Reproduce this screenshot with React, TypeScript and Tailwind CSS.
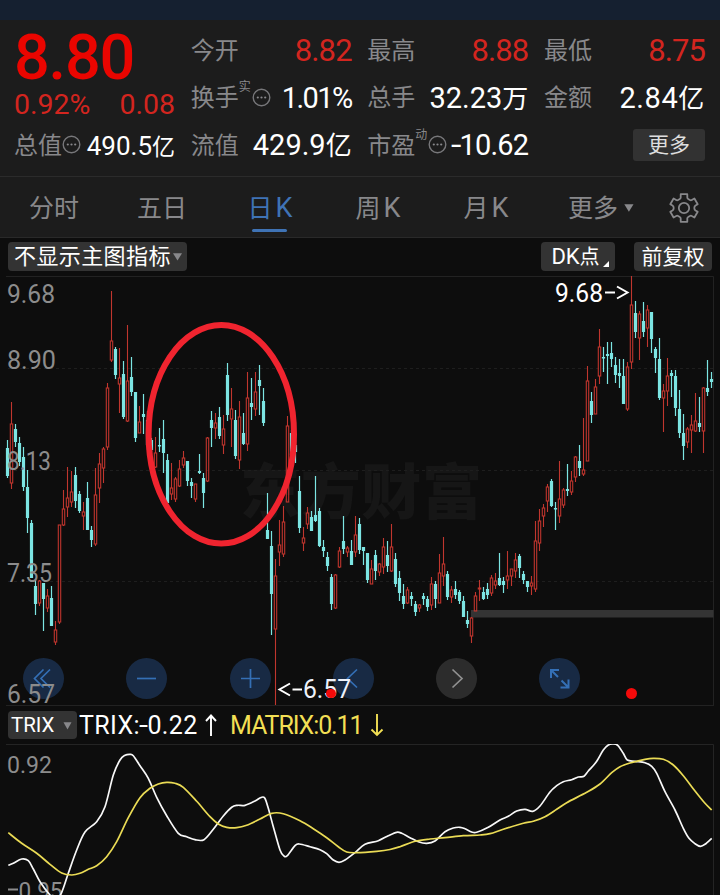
import React from "react";

type Candle = [number, number, number, number, "r" | "c"];

// High, body top, body bottom and low of every candle, in chart pixels.
const CANDLES: Candle[] = [
  [440, 448, 476, 478, "c"], [402, 424, 483, 489, "r"], [424, 429, 442, 447, "c"], [437, 443, 462, 466, "c"],
  [447, 457, 487, 491, "c"], [470, 487, 518, 533, "c"], [520, 523, 578, 578, "c"], [580, 586, 604, 615, "c"],
  [580, 581, 603, 606, "r"], [583, 583, 599, 631, "c"], [589, 596, 608, 612, "r"], [586, 598, 626, 626, "c"],
  [621, 630, 642, 645, "r"], [525, 525, 622, 624, "r"], [490, 509, 525, 526, "r"], [467, 498, 507, 517, "r"],
  [471, 492, 502, 507, "r"], [467, 475, 501, 508, "c"], [491, 494, 511, 513, "c"], [502, 512, 516, 530, "r"],
  [482, 498, 530, 530, "c"], [526, 530, 540, 547, "c"], [468, 495, 544, 546, "r"], [453, 464, 488, 503, "r"],
  [447, 449, 468, 483, "r"], [383, 388, 447, 450, "r"], [291, 341, 360, 362, "r"], [347, 349, 375, 379, "c"],
  [348, 378, 384, 413, "r"], [361, 374, 417, 419, "c"], [325, 381, 421, 422, "r"], [357, 377, 392, 396, "c"],
  [392, 392, 438, 442, "c"], [406, 422, 433, 433, "r"], [394, 414, 417, 434, "c"], [411, 420, 445, 450, "c"],
  [438, 440, 450, 452, "c"], [437, 453, 467, 468, "r"], [428, 445, 446, 452, "c"], [420, 439, 453, 473, "c"],
  [454, 460, 503, 503, "c"], [463, 488, 494, 500, "r"], [477, 479, 499, 502, "r"], [460, 469, 486, 487, "r"],
  [451, 458, 465, 468, "r"], [461, 461, 481, 486, "c"], [478, 482, 486, 498, "c"], [484, 484, 499, 502, "r"],
  [454, 471, 473, 474, "c"], [473, 478, 493, 508, "c"], [437, 438, 481, 482, "r"], [411, 420, 428, 447, "c"],
  [413, 423, 428, 439, "r"], [407, 417, 436, 439, "c"], [415, 429, 445, 454, "r"], [363, 375, 415, 421, "c"],
  [388, 409, 419, 447, "r"], [410, 420, 456, 459, "c"], [401, 417, 460, 469, "r"], [413, 433, 444, 445, "c"],
  [372, 398, 444, 451, "r"], [378, 403, 407, 420, "c"], [372, 392, 409, 416, "r"], [365, 380, 386, 415, "c"],
  [388, 401, 423, 426, "c"], [493, 530, 539, 539, "c"], [531, 546, 594, 635, "c"], [559, 576, 629, 705, "r"],
  [520, 545, 552, 566, "r"], [506, 522, 554, 557, "r"], [416, 426, 502, 502, "r"], [430, 433, 455, 460, "c"],
  [440, 445, 452, 463, "c"], [476, 491, 528, 533, "c"], [527, 538, 543, 551, "r"], [507, 513, 524, 529, "r"],
  [511, 517, 531, 531, "c"], [476, 515, 521, 522, "c"], [508, 511, 546, 547, "c"], [540, 547, 551, 557, "c"],
  [552, 557, 566, 571, "c"], [574, 577, 604, 610, "c"], [574, 575, 608, 609, "r"], [547, 551, 567, 568, "r"],
  [516, 541, 549, 554, "c"], [546, 548, 552, 557, "r"], [540, 551, 565, 565, "c"], [516, 535, 552, 557, "r"],
  [518, 524, 550, 554, "c"], [547, 547, 551, 565, "c"], [553, 553, 580, 583, "c"], [560, 569, 584, 584, "r"],
  [550, 555, 571, 580, "c"], [563, 564, 572, 576, "r"], [538, 547, 567, 574, "r"], [541, 555, 566, 572, "c"],
  [524, 547, 571, 572, "r"], [553, 559, 584, 587, "c"], [571, 578, 593, 601, "c"], [584, 596, 604, 609, "c"],
  [587, 590, 603, 604, "r"], [592, 596, 599, 606, "c"], [601, 604, 612, 616, "c"], [604, 605, 608, 612, "r"],
  [593, 596, 599, 605, "c"], [596, 599, 607, 611, "c"], [577, 584, 605, 610, "r"], [581, 584, 599, 608, "c"],
  [554, 573, 603, 603, "r"], [537, 564, 576, 586, "r"], [571, 574, 597, 600, "c"], [586, 590, 597, 603, "r"],
  [581, 589, 595, 599, "c"], [590, 592, 601, 604, "c"], [596, 601, 617, 617, "c"], [611, 620, 624, 628, "c"],
  [617, 618, 636, 643, "r"], [592, 596, 611, 611, "r"], [580, 588, 589, 601, "r"], [587, 592, 599, 600, "c"],
  [583, 589, 595, 599, "c"], [575, 578, 593, 596, "r"], [573, 581, 585, 589, "r"], [553, 578, 585, 586, "c"],
  [577, 581, 585, 593, "c"], [551, 576, 580, 589, "r"], [569, 569, 576, 586, "r"], [553, 560, 571, 578, "r"],
  [554, 556, 568, 578, "c"], [571, 574, 580, 584, "c"], [581, 581, 587, 592, "c"], [576, 583, 586, 595, "r"],
  [521, 541, 589, 592, "r"], [509, 521, 543, 551, "r"], [504, 508, 516, 527, "r"], [484, 487, 501, 512, "r"],
  [479, 481, 506, 507, "c"], [502, 508, 509, 530, "c"], [461, 499, 516, 523, "r"], [488, 490, 505, 508, "r"],
  [464, 489, 491, 496, "c"], [471, 481, 492, 495, "r"], [456, 457, 477, 482, "r"], [445, 461, 468, 476, "c"],
  [418, 470, 474, 476, "r"], [366, 381, 461, 461, "r"], [392, 401, 415, 423, "c"], [379, 387, 414, 414, "r"],
  [329, 347, 376, 384, "r"], [347, 357, 358, 372, "c"], [342, 354, 356, 384, "c"], [342, 353, 359, 367, "c"],
  [357, 365, 375, 383, "c"], [359, 373, 376, 388, "c"], [359, 376, 404, 404, "c"], [362, 367, 409, 411, "r"],
  [276, 305, 362, 369, "r"], [301, 313, 332, 338, "c"], [311, 314, 338, 360, "r"], [302, 321, 332, 337, "c"],
  [305, 310, 328, 347, "r"], [312, 312, 339, 353, "c"], [347, 349, 358, 373, "c"], [338, 359, 398, 400, "c"],
  [384, 391, 398, 432, "r"], [358, 376, 391, 406, "r"], [370, 373, 376, 397, "c"], [370, 376, 408, 416, "c"],
  [390, 409, 433, 438, "c"], [414, 433, 446, 460, "c"], [427, 429, 442, 448, "r"], [415, 425, 430, 453, "r"],
  [393, 421, 431, 432, "r"], [397, 423, 427, 432, "c"], [387, 388, 431, 453, "r"], [360, 388, 392, 396, "c"],
  [372, 379, 382, 388, "c"],
];

type Point = [number, number];

const TRIX_LINE: Point[] = [
  [8.3, 865.3], [13.3, 863.3], [21.7, 859], [28.3, 860.7], [33.3, 869], [40, 881.7], [50, 895], [56, 900], [61.7, 892.3],
  [68.3, 873.3], [76.7, 850], [85, 832], [96.7, 821.7], [105, 806.7], [113.3, 775], [120, 760], [125, 755.3], [130, 754.3],
  [133.3, 755.7], [140, 765.7], [148.3, 778.3], [156.7, 797.3], [166.7, 815.7], [178.3, 833.3], [186.7, 836.7], [195, 839.7],
  [204, 839.7], [213.3, 829.3], [223.3, 816], [231.7, 807.3], [237.3, 805.3], [245, 805.3], [255, 801], [261, 797.5],
  [264.7, 798], [268.3, 808.3], [273.3, 826.7], [280, 850], [284, 856], [287.3, 855.7], [295, 845.7], [299.3, 844],
  [310, 846.7], [320, 849.7], [326.7, 853.7], [333.3, 860], [339, 862.3], [345, 860], [355, 852.7], [365, 844.3],
  [378.3, 840.7], [388.3, 835.7], [396.7, 832.3], [401.7, 833.3], [410, 837.7], [418.3, 841.7], [426.7, 843.3], [435, 841],
  [445, 831.7], [453.3, 828], [460, 827.3], [465, 828.7], [471.7, 832], [476.7, 832.3], [488.3, 827.3], [500, 820],
  [508.3, 816.3], [516.7, 811], [525, 809.3], [532.7, 811.3], [540, 806], [550, 792], [556.7, 785.7], [563.3, 781.7],
  [571.7, 779.7], [578.3, 777], [584, 776.3], [588.3, 771], [596, 762.3], [603.3, 750], [608.3, 745], [612.7, 744],
  [617.7, 745.3], [623.3, 753.3], [627.3, 760], [635, 761.3], [645, 762.7], [651.7, 766.3], [656.7, 773.3], [665, 791.7],
  [675, 810], [683.3, 828.3], [689, 838.3], [695, 843.7], [700.3, 846.3], [705, 844.3], [711.7, 838.3],
];

const MATRIX_LINE: Point[] = [
  [8.3, 832.7], [21.7, 843.3], [36.7, 853.3], [50, 864.3], [61.7, 873], [71.7, 875], [80, 873.3], [88.3, 869.3],
  [96.7, 865.7], [106.7, 856.7], [116.7, 841.7], [128.3, 817.7], [140, 797.7], [150, 788.3], [158.3, 784], [166.7, 782.3],
  [175, 783.3], [183.3, 787.3], [196.7, 801.3], [210, 816.7], [218.3, 824], [226.7, 827.3], [236.7, 827.7], [246.7, 825.3],
  [260, 819], [271.7, 813.3], [283.3, 813.7], [300, 820.7], [313.3, 828.7], [326.7, 837.7], [338.3, 846.7], [346.7, 852],
  [356.7, 852.7], [376.7, 851.3], [390, 849.5], [400, 846.7], [415, 841.3], [430, 839], [445, 837.7], [463.3, 835.7],
  [480, 835], [490, 833.7], [503.3, 829.3], [523.3, 823.3], [533.3, 821.3], [545, 816.7], [556.7, 809.3], [566.7, 802.7],
  [586.7, 792.3], [600, 784], [611.7, 772.7], [620, 766.7], [630, 763], [645, 759.3], [653.3, 758.3], [663.3, 759.3],
  [673.3, 765], [683.3, 775.7], [695, 791], [705, 803.3], [711.7, 810],
];

// Catmull-Rom spline through the points, written as cubic Béziers.
function smooth(points: Point[]): string {
  let d = `M${points[0][0]} ${points[0][1]}`;
  for (let i = 0; i < points.length - 1; i++) {
    const a = points[Math.max(0, i - 1)];
    const b = points[i];
    const c = points[i + 1];
    const e = points[Math.min(points.length - 1, i + 2)];
    d += `C${b[0] + (c[0] - a[0]) / 6} ${b[1] + (c[1] - a[1]) / 6} ${c[0] - (e[0] - b[0]) / 6} ${c[1] - (e[1] - b[1]) / 6} ${c[0]} ${c[1]}`;
  }
  return d;
}

function Info() {
  return (
    <svg className="h-[19px] w-[19px] shrink-0" viewBox="0 0 19 19" fill="none">
      <circle cx="9.5" cy="9.5" r="8.3" stroke="#77777a" strokeWidth="1.4" />
      <circle cx="5.8" cy="9.5" r="1.1" fill="#88888b" />
      <circle cx="9.5" cy="9.5" r="1.1" fill="#88888b" />
      <circle cx="13.2" cy="9.5" r="1.1" fill="#88888b" />
    </svg>
  );
}

function Cell({ label, sup, info, children }: { label: string; sup?: string; info?: boolean; children?: React.ReactNode }) {
  return (
    <div className="flex h-[47.5px] items-center justify-between whitespace-nowrap">
      <div className="flex items-center text-[24px] leading-none text-[#88888b]">
        <span>{label}</span>
        {sup && <span className="mr-[1px] self-start text-[12px] leading-none -mt-[5px]">{sup}</span>}
        {info && <span className="-mt-[2px]"><Info /></span>}
      </div>
      <div className="leading-none">{children}</div>
    </div>
  );
}

const RED = "text-[31px] tracking-[-0.9px] text-[#d3251f]";
const WHITE = "text-[29px] text-white";

function Quote() {
  return (
    <section className="grid h-[157px] grid-cols-[161px_161px_161px_161px] justify-between border-b border-[#2b2b2b] bg-[#1c1c1c] pt-[7px] pr-[15px] pl-[14px]">
      <div>
        <div className="flex h-[62px] items-center text-[63px] leading-[50px] font-medium tracking-[-1.2px] text-[#ea0500]">8.80</div>
        <div className="flex h-[33px] items-center justify-between text-[28.5px] leading-none text-[#d3251f]">
          <span>0.92%</span>
          <span>0.08</span>
        </div>
        <Cell label="总值" info>
          <span className="text-[26px] text-white">490.5<span className="text-[23px]">亿</span></span>
        </Cell>
      </div>
      <div>
        <Cell label="今开"><span className={RED}>8.82</span></Cell>
        <Cell label="换手" sup="实" info><span className="text-[29px] tracking-[-1.6px] text-white">1.01%</span></Cell>
        <Cell label="流值"><span className={WHITE}>429.9<span className="text-[26px]">亿</span></span></Cell>
      </div>
      <div>
        <Cell label="最高"><span className={RED}>8.88</span></Cell>
        <Cell label="总手"><span className={WHITE}>32.23<span className="text-[26px]">万</span></span></Cell>
        <Cell label="市盈" sup="动" info>
          <span className="text-[29px] tracking-[-0.8px] text-white"><span className="inline-block scale-x-130">-</span>10.62</span>
        </Cell>
      </div>
      <div>
        <Cell label="最低"><span className={RED}>8.75</span></Cell>
        <Cell label="金额"><span className="text-[29px] tracking-[0.6px] text-white">2.84<span className="text-[26px]">亿</span></span></Cell>
        <div className="flex h-[46px] items-center justify-end">
          <button className="flex h-[32px] w-[72px] items-center justify-center rounded-[3px] bg-[#323232] text-[21px] leading-none text-[#dedede]">更多</button>
        </div>
      </div>
    </section>
  );
}

function Tabs() {
  const tabs = ["分时", "五日", "日K", "周K", "月K"];
  return (
    <nav className="flex h-[61px] items-center border-b border-[#292929] bg-[#1c1c1c] pt-[1px] text-[25px] leading-none text-[#88888b]">
      {tabs.map((t) => (
        <div key={t} className={t === "日K" ? "relative flex h-full w-[108px] items-center justify-center pt-[1px] text-[#3f73b5]" : "flex h-full w-[108px] items-center justify-center pt-[1px]"}>
          {t[1] === "K" ? <span>{t[0]}<span className="ml-[3px] text-[27px]">K</span></span> : t}
          {t === "日K" && <span className="absolute bottom-[5px] left-[36px] h-[3px] w-[35px] rounded-full bg-[#3f73b5]" />}
        </div>
      ))}
      <div className="ml-[28px] flex items-center gap-[6px] pt-[1px]">
        更多
        <svg className="h-[8px] w-[10px]" viewBox="0 0 10 8"><path d="M.3 .2h9.2L4.9 7.8z" fill="#88888b" /></svg>
      </div>
      <svg className="ml-[34px] h-[32px] w-[32px]" viewBox="0 0 32 32" fill="none" stroke="#88888b" strokeWidth="1.8" strokeLinejoin="round">
        <path d="M12.7 2.2h6.6v3.3q0 1 .9 1.5l1.7 1q1 .6 1.9 0l2.6-1.5 3.3 5.7-2.2 1.3q-1.2.8-1.2 2.5t1.2 2.5l2.2 1.3-3.3 5.7-2.6-1.5q-.9-.6-1.9 0l-1.7 1q-.9.5-.9 1.5v3.3h-6.6v-3.3q0-1-.9-1.5l-1.7-1q-1-.6-1.9 0l-2.6 1.5-3.3-5.7 2.2-1.3q1.2-.8 1.2-2.5t-1.2-2.5l-2.2-1.3 3.3-5.7L8.2 8q.9.6 1.9 0l1.7-1q.9-.5.9-1.5z" />
        <circle cx="16" cy="16" r="5.2" />
      </svg>
    </nav>
  );
}

function Toolbar() {
  return (
    <div className="flex h-[38px] items-start pt-[4px] pr-[8px] pl-[8px] text-[22px] leading-none whitespace-nowrap text-white">
      <button className="flex h-[29px] w-[179px] items-center gap-[2px] rounded-[4px] bg-[#333333] pt-[1px] pl-[6px] tracking-[0.4px]">
        不显示主图指标
        <svg className="h-[8px] w-[9px] shrink-0" viewBox="0 0 9 8"><path d="M0 .3h9L4.5 7.5z" fill="#88888b" /></svg>
      </button>
      <button className="ml-auto flex h-[29px] w-[74px] items-center rounded-[4px] bg-[#333333] pt-[1px] pl-[7px]">
        <span className="w-[55px]"><span className="text-[22px] tracking-[-0.2px]">DK</span><span className="text-[20px]">点</span></span>
        <svg className="mt-[14px] h-[6px] w-[6px]" viewBox="0 0 6 6"><path d="M6 0v6H0z" fill="#fff" /></svg>
      </button>
      <button className="ml-[19px] flex h-[29px] w-[78px] items-center justify-center rounded-[4px] bg-[#333333] pt-[1px] text-[21px]">前复权</button>
    </div>
  );
}

function CandleShape({ candle, x }: { candle: Candle; x: number }) {
  const [high, top, bottom, low, color] = candle;
  if (color === "c") {
    return (
      <g fill="#7ce5e3">
        <rect x={x - 0.6} y={high} width="1.2" height={low - high} />
        <rect x={x - 1.6} y={top} width="3.2" height={Math.max(1.5, bottom - top)} />
      </g>
    );
  }
  return (
    <g stroke="#c0362e" fill="none" strokeWidth="1.1">
      <path d={`M${x} ${high}V${top}M${x} ${bottom}V${low}`} />
      <rect x={x - 1.2} y={top} width="2.4" height={Math.max(1, bottom - top)} />
    </g>
  );
}

function PriceText({ x, y, width, fill, children }: { x: number; y: number; width: number; fill: string; children: string }) {
  return (
    <text x={x} y={y} textLength={width} lengthAdjust="spacingAndGlyphs" fill={fill} fontSize="25">
      {children}
    </text>
  );
}

function RoundButton({ dim, children }: { dim?: boolean; children: React.ReactNode }) {
  return (
    <button className={dim ? "h-[41px] w-[41px] rounded-full bg-[#343434]/80" : "h-[41px] w-[41px] rounded-full bg-[#1b3253]/80"}>
      <svg className="h-[41px] w-[41px]" viewBox="0 0 41 41" fill="none" stroke={dim ? "#919191" : "#346fb5"} strokeWidth="1.7">
        {children}
      </svg>
    </button>
  );
}

function PriceChart() {
  return (
    <div className="relative h-[430px]">
      <svg className="block h-[430px] w-[720px]" viewBox="0 276 720 430">
        <text x="240" y="514" fontSize="60" fontWeight="900" textLength="242" fill="#161616">东方财富</text>
        <g strokeWidth="1">
          <path d="M6 276.5H713.5V705.5M6 705.5H714" fill="none" stroke="#222222" />
          <path d="M8 368.5H713M8 470.5H713M8 581.5H713" strokeDasharray="3 3" stroke="#1e1e1e" />
        </g>
        <rect x="471" y="610" width="242.5" height="7.5" fill="#343434" />
        {CANDLES.map((c, i) => <CandleShape key={i} candle={c} x={7.5 + i * 4} />)}
        <PriceText x={7} y={302.5} width={48} fill="#8c8c8c">9.68</PriceText>
        <PriceText x={7} y={369} width={49} fill="#8c8c8c">8.90</PriceText>
        <PriceText x={7} y={470} width={44} fill="#8c8c8c">8.13</PriceText>
        <PriceText x={7} y={581.5} width={45} fill="#8c8c8c">7.35</PriceText>
        <PriceText x={555} y={301.5} width={48} fill="#fff">9.68</PriceText>
        <path d="M605 292.5h10M617 286.5l10.5 6-10.5 6" fill="none" stroke="#fff" strokeWidth="2" />
        <path d="M290 683.5l-10.5 6 10.5 6M292.5 689.5h9.5" fill="none" stroke="#fff" strokeWidth="2" />
        <ellipse cx="221.3" cy="434.3" rx="72.7" ry="109.3" fill="none" stroke="#f0242f" strokeWidth="6" />
      </svg>
      <div className="absolute top-[382px] left-[23px] flex gap-[62.3px]">
        <RoundButton><path d="M20.5 11.5l-9 9 9 9M27 11.5l-9 9 9 9" /></RoundButton>
        <RoundButton><path d="M11 20.5h19" /></RoundButton>
        <RoundButton><path d="M11 20.5h19M20.5 11v19" /></RoundButton>
        <RoundButton><path d="M24 11.5l-9.5 9 9.5 9" /></RoundButton>
        <RoundButton dim><path d="M16.5 11.5l9.5 9-9.5 9" /></RoundButton>
        <RoundButton><path d="M12 20v-8h8M12 12l7 7M29.5 21.5v8h-8M29.5 29.5l-7-7" strokeWidth="2" /></RoundButton>
      </div>
      <svg className="pointer-events-none absolute top-[400px] left-0 h-[30px] w-[400px]" viewBox="0 676 400 30">
        <PriceText x={7} y={703} width={48} fill="#8c8c8c">6.57</PriceText>
        <PriceText x={303} y={698} width={48} fill="#eef2fb">6.57</PriceText>
      </svg>
      <span className="absolute top-[413px] left-[326px] h-[9px] w-[10px] rounded-full bg-[#f40a0a]" />
      <span className="absolute top-[412px] left-[626px] h-[11px] w-[11px] rounded-full bg-[#f40a0a]" />
    </div>
  );
}

function IndicatorBar() {
  return (
    <div className="flex h-[38px] items-center pl-[8px] text-[25px] leading-none whitespace-nowrap text-white">
      <button className="flex h-[28px] w-[69px] items-center justify-between rounded-[4px] bg-[#333333] pt-[1px] pr-[5px] pl-[3px] text-[20.5px]">
        TRIX
        <svg className="h-[8px] w-[9px]" viewBox="0 0 9 8"><path d="M.5 .3h8L4.5 7.5z" fill="#88888b" /></svg>
      </button>
      <span className="ml-[2px] w-[126px] pt-[1px] tracking-[0.4px]">TRIX:<span className="inline-block scale-x-130">-</span>0.22</span>
      <svg className="h-[24px] w-[12px]" viewBox="0 0 12 24" fill="none" stroke="#fff" strokeWidth="1.9"><path d="M6 23V3M1 8l5-5.5L11 8" /></svg>
      <span className="ml-[13px] w-[140px] pt-[1px] tracking-[-1.1px] text-[#f2df54]">MATRIX:0.11</span>
      <svg className="h-[24px] w-[14px]" viewBox="0 0 14 24" fill="none" stroke="#f2df54" strokeWidth="1.9"><path d="M7 1v21M1.5 16.5L7 22l5.5-5.5" /></svg>
    </div>
  );
}

function TrixChart() {
  return (
    <svg className="block h-[151px] w-[720px]" viewBox="0 744 720 151">
      <path d="M6 744.5H713.5V895" fill="none" stroke="#242424" />
      <text x="7" y="773" fontSize="24" textLength="45" lengthAdjust="spacingAndGlyphs" fill="#8c8c8c">0.92</text>
      <path d="M8 889.5h10" stroke="#8c8c8c" strokeWidth="2" />
      <text x="18.5" y="898.5" fontSize="24" textLength="44" lengthAdjust="spacingAndGlyphs" fill="#8c8c8c">0.95</text>
      <path d={smooth(TRIX_LINE)} fill="none" stroke="#f8f8f8" strokeWidth="1.7" />
      <path d={smooth(MATRIX_LINE)} fill="none" stroke="#eadb55" strokeWidth="1.7" />
    </svg>
  );
}

export default function App() {
  return (
    <main className="h-[895px] w-[720px] overflow-hidden bg-[#0d0d0d] font-[Roboto,'Noto_Sans_CJK_SC',sans-serif]">
      <div className="h-[20px] bg-[#152030]" />
      <Quote />
      <Tabs />
      <Toolbar />
      <PriceChart />
      <IndicatorBar />
      <TrixChart />
    </main>
  );
}
